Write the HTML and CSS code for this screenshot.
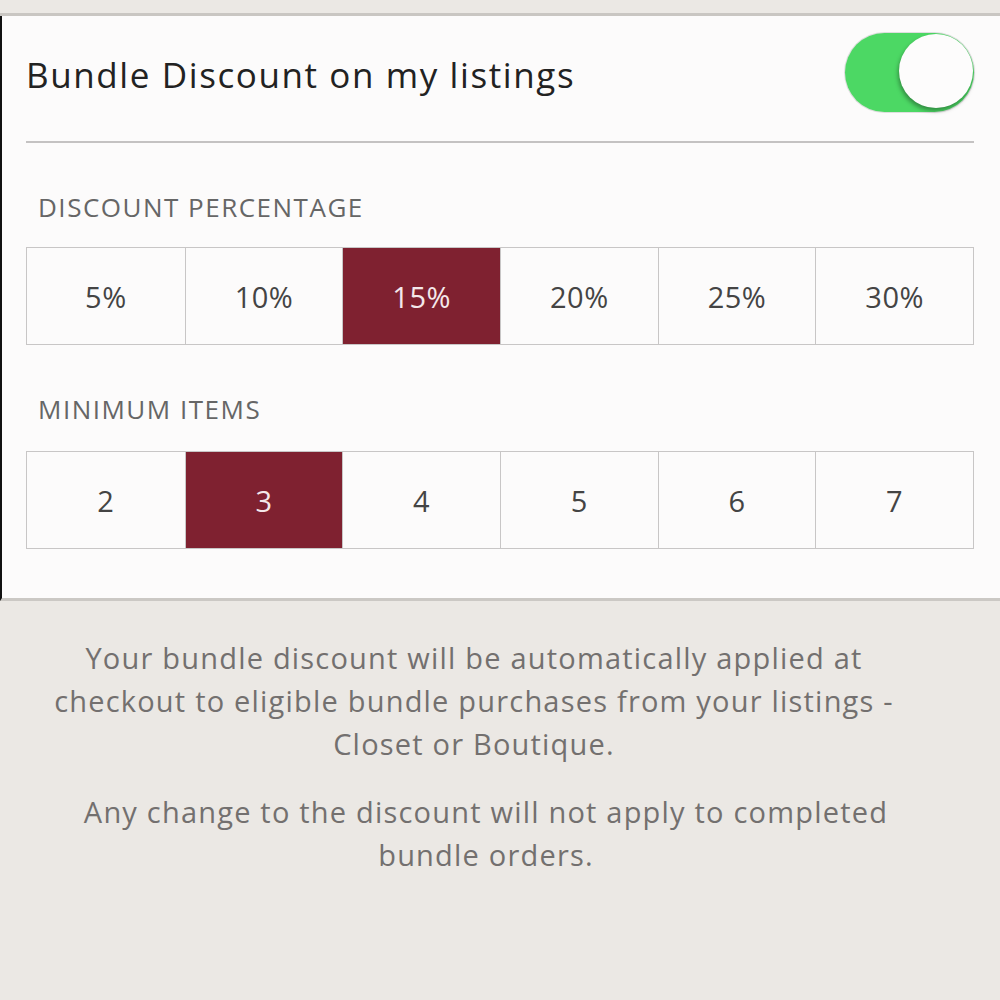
FILE: index.html
```html
<!DOCTYPE html>
<html lang="en">
<head>
    <meta charset="UTF-8">
    <meta name="viewport" content="width=device-width, initial-scale=1.0">
    <title>Bundle Discount</title>
    <link rel="stylesheet" href="styles.css">
</head>
<body>
    <div class="top-strip"></div>
    <div class="settings-panel">
        <div class="toggle-row">
            <div class="toggle-title">Bundle Discount on my listings</div>
            <div class="switch on">
                <div class="knob"></div>
            </div>
        </div>
        <div class="divider"></div>

        <div class="section-label">DISCOUNT PERCENTAGE</div>
        <div class="segments">
            <div class="segment">5%</div>
            <div class="segment">10%</div>
            <div class="segment selected">15%</div>
            <div class="segment">20%</div>
            <div class="segment">25%</div>
            <div class="segment">30%</div>
        </div>

        <div class="section-label second">MINIMUM ITEMS</div>
        <div class="segments">
            <div class="segment">2</div>
            <div class="segment selected">3</div>
            <div class="segment">4</div>
            <div class="segment">5</div>
            <div class="segment">6</div>
            <div class="segment">7</div>
        </div>
    </div>
    <div class="footer-note">
        <p>Your bundle discount will be automatically applied at checkout to eligible bundle purchases from your listings - Closet or Boutique.</p>
        <p class="second">Any change to the discount will not apply to completed bundle orders.</p>
    </div>
</body>
</html>
```

FILE: styles.css
```css
body {
    margin: 0;
    background-color: #ebe8e4;
    font-family: "Open Sans", Lato, sans-serif;
    height: 1000px;
    overflow: hidden;
}

.top-strip {
    height: 13px;
    border-bottom: 3px solid #c9c6c2;
}

.settings-panel {
    background: #fcfbfb;
    border-left: 2px solid #111;
    border-bottom: 3px solid #cbc8c4;
    padding: 0 26px 49px 24px;
}

.toggle-row {
    display: flex;
    justify-content: space-between;
    align-items: flex-start;
    height: 125px;
}

.toggle-title {
    font-size: 35px;
    line-height: 40px;
    margin-top: 39px;
    color: #222;
    letter-spacing: 1.6px;
}

.switch {
    width: 129px;
    height: 79px;
    margin-top: 17px;
    border-radius: 40px;
    background: #4cd864;
    box-shadow: 0 0 0 1px #dedede;
    display: flex;
    justify-content: flex-end;
    align-items: center;
}

.knob {
    width: 74px;
    height: 74px;
    border-radius: 50%;
    background: #fdfcfc;
    box-shadow: -1px 3px 4px rgba(0, 0, 0, 0.35);
    margin-right: 1px;
    margin-bottom: 4px;
}

.divider {
    height: 2px;
    background: #c4c2c2;
}

.section-label {
    font-size: 26px;
    color: #666;
    padding: 49px 12px 25px 12px;
    line-height: 30px;
    letter-spacing: 1.5px;
}

.section-label.second {
    padding-bottom: 27px;
}

.segments {
    display: grid;
    grid-template-columns: repeat(6, 1fr);
    border: 1px solid #c8c6c6;
    height: 96px;
}

.segment {
    display: flex;
    justify-content: center;
    align-items: center;
    font-size: 29px;
    letter-spacing: 0.5px;
    color: #444;
    border-left: 1px solid #c8c6c6;
}

.segment:first-child {
    border-left: none;
}

.segment.selected {
    background: #7f2130;
    color: #f4e8ea;
}

.footer-note {
    text-align: center;
    color: #73706f;
    font-size: 29px;
    line-height: 43px;
    letter-spacing: 1.2px;
    padding: 35px 86px 0 34px;
}

.footer-note p {
    margin: 0 0 25px 0;
}

.footer-note p.second {
    padding-left: 24px;
}
```
